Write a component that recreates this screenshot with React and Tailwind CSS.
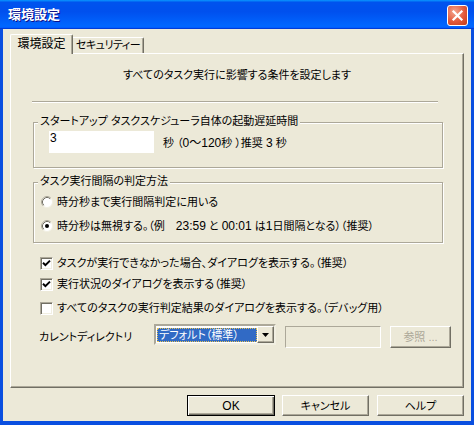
import React from 'react';

const base = "font-['Liberation_Sans','Noto_Sans_CJK_JP',sans-serif] [font-feature-settings:'palt'] text-[11px] leading-[14px]";

const CheckBox = ({ checked }) => (
  <span className="w-[13px] h-[13px] shrink-0 bg-white border border-t-[#ACA899] border-l-[#ACA899] border-r-white border-b-white shadow-[inset_1px_1px_0_#716F64,inset_-1px_-1px_0_#F1EFE2] flex items-center justify-center">
    {checked && (
      <svg width="11" height="11" viewBox="0 0 11 11">
        <path d="M2 4.8 L4.4 7.2 L9 2.6" fill="none" stroke="#000" strokeWidth="2" />
      </svg>
    )}
  </span>
);

const Radio = ({ checked }) => (
  <svg width="12" height="12" viewBox="0 0 12 12" className="shrink-0">
    <circle cx="6" cy="6" r="5.5" fill="#fff" stroke="#F1EFE2" />
    <path d="M2.11 9.89 A5.5 5.5 0 0 1 9.89 2.11" fill="none" stroke="#ACA899" />
    <path d="M2.82 9.18 A4.5 4.5 0 0 1 9.18 2.82" fill="none" stroke="#716F64" />
    {checked && <circle cx="6" cy="6" r="2" fill="#000" />}
  </svg>
);

const GroupBox = ({ label, className, children }) => (
  <div className={`ml-[22px] w-[410px] border border-[#ACA899] shadow-[inset_1px_1px_0_#fff,1px_1px_0_#fff] flex flex-col ${className}`}>
    <span className="-mt-[9px] ml-[4px] px-[2px] self-start bg-[#ECE9D8] h-[14px] whitespace-nowrap">{label}</span>
    {children}
  </div>
);

const Button = ({ label, isDefault, disabled, className }) => (
  <div
    className={`flex items-center justify-center whitespace-nowrap bg-[#ECE9D8] ${
      isDefault
        ? 'border border-black shadow-[inset_1px_1px_0_#fff,inset_-1px_-1px_0_#716F64,inset_-2px_-2px_0_#ACA899]'
        : 'border border-t-white border-l-white border-r-[#716F64] border-b-[#716F64] shadow-[inset_-1px_-1px_0_#ACA899]'
    } ${disabled ? 'text-[#ACA899]' : 'text-black'} ${className}`}
  >
    {label}
  </div>
);

export default function App() {
  return (
    <div className={`w-[474px] h-[425px] flex flex-col text-black ${base}`}>
      {/* Title bar */}
      <div className="h-[29px] shrink-0 flex items-start justify-between pl-[8px] pr-[6px] bg-[linear-gradient(180deg,#0997ff,#0053ee_8%,#0050ee_40%,#06f_88%,#06f_93%,#005bff_95%,#003dd7_96%,#003dd7)]">
        <span className="mt-[7px] text-white font-bold text-[13px] leading-[16px] [text-shadow:1px_1px_0_#0F1089]">環境設定</span>
        <div className="mt-[5px] w-[21px] h-[21px] rounded-[3px] border border-white bg-[radial-gradient(circle_at_35%_30%,#F4A58E,#E2593B_55%,#C23B1A)] flex items-center justify-center">
          <svg width="19" height="19" viewBox="0 0 19 19">
            <path d="M5.5 5.5 L13.5 13.5 M13.5 5.5 L5.5 13.5" stroke="#fff" strokeWidth="2.2" strokeLinecap="square" />
          </svg>
        </div>
      </div>

      {/* Body */}
      <div className="flex-1 flex flex-col bg-[#ECE9D8] border-l-[3px] border-r-[3px] border-b-[4px] border-[#0A4FE0]">
        {/* Tabs */}
        <div className="pt-[5px] pl-[7px] flex items-end">
          <div className="relative z-10 -mb-[1px] w-[63px] h-[20px] bg-[#ECE9D8] border-t border-l border-white border-r border-r-[#716F64] rounded-tl-[2px] rounded-tr-[2px] shadow-[inset_-1px_0_0_#ACA899] flex justify-center pt-[2px] text-[12px] whitespace-nowrap">
            環境設定
          </div>
          <div className="w-[71px] h-[16px] bg-[#ECE9D8] border-t border-white border-r border-r-[#716F64] rounded-tr-[2px] shadow-[inset_-1px_0_0_#ACA899] flex justify-center tracking-[-0.5px] whitespace-nowrap">
            セキュリティー
          </div>
        </div>

        {/* Panel */}
        <div className="ml-[7px] w-[454px] h-[335px] border-t border-l border-white border-r border-b border-r-[#716F64] border-b-[#716F64] shadow-[inset_-1px_-1px_0_#ACA899] flex flex-col">
          <div className="mt-[14px] h-[14px] text-center">すべてのタスク実行に影響する条件を設定します</div>
          <div className="mt-[19px] ml-[21px] w-[406px] h-[2px] border-t border-[#ACA899] border-b border-b-white" />

          <GroupBox label="スタートアップ タスクスケジューラ自体の起動遅延時間" className="mt-[19px] h-[46px]">
            <div className="mt-[3px] ml-[15px] flex items-center">
              <div className="w-[105px] h-[22px] bg-white pl-[1px] text-[12px]">3</div>
              <span className="ml-[9px] mt-[2px]">秒 （<span className="text-[12px]">0～120</span>秒 ）推奨 <span className="text-[12px]">3</span> 秒</span>
            </div>
          </GroupBox>

          <GroupBox label="タスク実行間隔の判定方法" className="mt-[14px] h-[61px]">
            <div className="mt-[7px] ml-[7px] h-[14px] flex items-center gap-[4px]">
              <Radio />
              <span>時分秒まで実行間隔判定に用いる</span>
            </div>
            <div className="mt-[10px] ml-[7px] h-[14px] flex items-center gap-[4px]">
              <Radio checked />
              <span className="whitespace-pre">時分秒は無視する。（例　<span className="text-[12px]">23:59</span> と <span className="text-[12px]">00:01</span> は<span className="text-[12px]">1</span>日間隔となる）（推奨）</span>
            </div>
          </GroupBox>

          <div className="mt-[13px] ml-[29px] h-[14px] flex items-center gap-[4px]">
            <CheckBox checked />
            <span>タスクが実行できなかった場合、ダイアログを表示する。（推奨）</span>
          </div>
          <div className="mt-[7px] ml-[29px] h-[14px] flex items-center gap-[4px]">
            <CheckBox checked />
            <span>実行状況のダイアログを表示する（推奨）</span>
          </div>
          <div className="mt-[10px] ml-[29px] h-[14px] flex items-center gap-[4px]">
            <CheckBox />
            <span>すべてのタスクの実行判定結果のダイアログを表示する。（デバッグ用）</span>
          </div>

          <div className="mt-[9px] ml-[28px] flex items-start">
            <span className="mt-[6px] w-[115px]">カレントディレクトリ</span>
            <div className="w-[122px] h-[21px] bg-white border-2 border-t-[#ACA899] border-l-[#ACA899] border-r-[#F1EFE2] border-b-[#F1EFE2] flex items-start">
              <div className="ml-[1px] mt-[2px] w-[100px] h-[14px] bg-[#316AC5] border border-dotted border-[#E8C454] text-white leading-[12px] pl-[1px] overflow-hidden whitespace-nowrap">
                デフォルト（標準）
              </div>
              <div className="ml-auto w-[17px] h-[17px] bg-[#ECE9D8] border border-t-white border-l-white border-r-[#716F64] border-b-[#716F64] shadow-[inset_-1px_-1px_0_#ACA899] flex items-center justify-center">
                <svg width="7" height="4" viewBox="0 0 7 4">
                  <polygon points="0,0 7,0 3.5,4" fill="#000" />
                </svg>
              </div>
            </div>
            <div className="ml-[9px] mt-[2px] w-[96px] h-[22px] bg-[#ECE9D8] border border-t-[#ACA899] border-l-[#ACA899] border-r-white border-b-white" />
            <Button label="参照 ..." disabled className="ml-[9px] mt-[2px] w-[61px] h-[22px]" />
          </div>
        </div>

        {/* Dialog buttons */}
        <div className="mt-[7px] pr-[7px] flex justify-end">
          <Button label="OK" isDefault className="w-[88px] h-[21px] text-[12px]" />
          <Button label="キャンセル" className="ml-[7px] w-[87px] h-[21px]" />
          <Button label="ヘルプ" className="ml-[8px] w-[87px] h-[21px]" />
        </div>
      </div>
    </div>
  );
}
